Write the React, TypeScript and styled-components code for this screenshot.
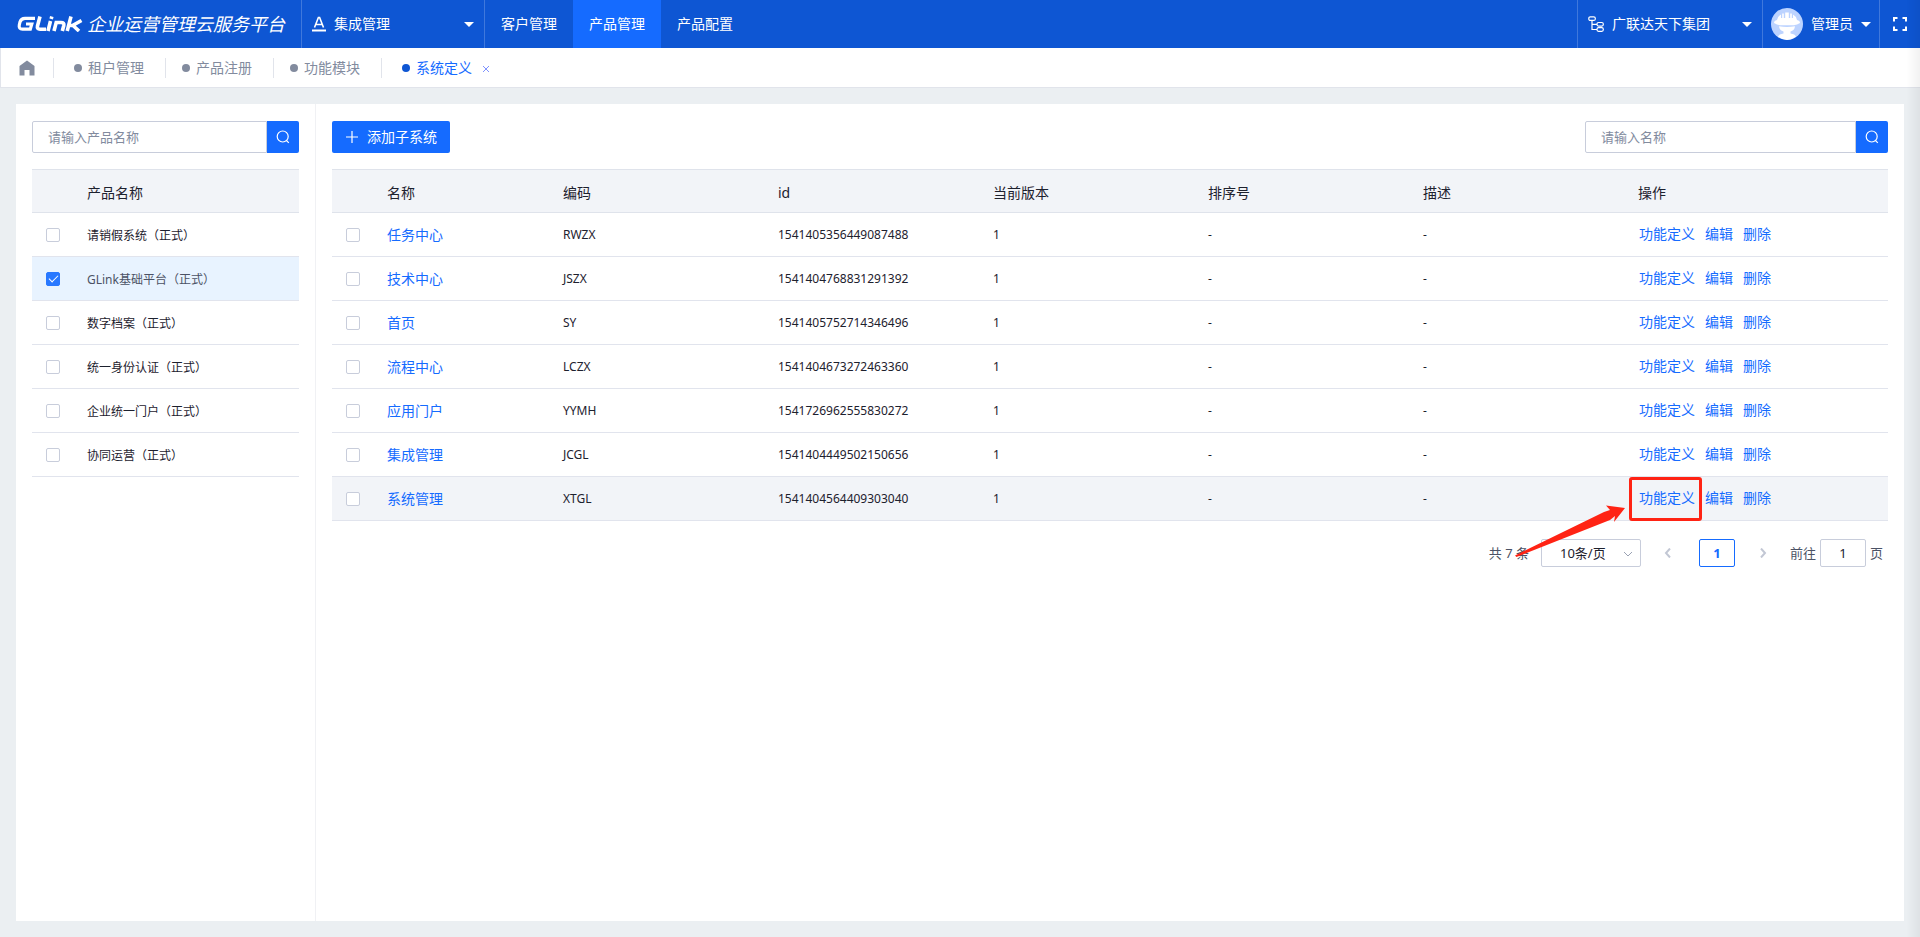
import React, { useState } from 'react';
import styled, { createGlobalStyle, css } from 'styled-components';

const GlobalStyle = createGlobalStyle`
  * { box-sizing: border-box; }
  body {
    margin: 0;
    background: #ebeff2;
    color: #1d212e;
    font: 14px/20px "Noto Sans", "Noto Sans CJK SC", sans-serif;
  }
  button, input, select { font: inherit; color: inherit; margin: 0; }
  button { border: 0; padding: 0; background: none; cursor: pointer; }
  a { text-decoration: none; }
  svg { flex: none; }
`;

const Page = styled.div`
  min-height: 100vh;
  display: flex;
  flex-direction: column;
  overflow-x: hidden;
`;

const Header = styled.header`
  height: 48px;
  display: flex;
  background: #0e56d3;
  color: #fff;
`;

const Brand = styled.div`
  width: 301px;
  display: flex;
  align-items: center;
  gap: 3px;
  padding-left: 17px;
  flex: none;
`;

const BrandTitle = styled.h1`
  margin: 0;
  font-size: 18px;
  line-height: 24px;
  font-weight: 400;
  font-style: italic;
  white-space: nowrap;
`;

const HeaderButton = styled.button<{ $width: number; $left?: number; $right?: number }>`
  width: ${(p) => p.$width}px;
  flex: none;
  display: flex;
  align-items: center;
  gap: 8px;
  padding: 0 ${(p) => p.$right ?? 10}px 0 ${(p) => p.$left ?? 10}px;
  border-left: 1px solid #3f78dc;
  white-space: nowrap;
`;

const Caret = styled.span`
  border: 5px solid transparent;
  border-top-color: #fff;
  border-bottom: 0;
`;

const Push = styled.span`
  flex: 1;
  text-align: left;
`;

const Nav = styled.nav`
  flex: 1;
  display: flex;
  border-left: 1px solid #3f78dc;
`;

const NavLink = styled.a<{ $active?: boolean }>`
  padding: 0 16px;
  line-height: 48px;
  color: #fff;
  white-space: nowrap;
  ${(p) => p.$active && css`background: #156bff;`}
`;

const TabBar = styled.nav`
  height: 40px;
  display: flex;
  align-items: center;
  background: #fff;
  border: 1px solid #e1e4eb;
  border-top: 0;
  border-right: 0;
`;

const Home = styled.a`
  width: 52px;
  padding-left: 18px;
  display: flex;
`;

const Tab = styled.div<{ $wide?: boolean }>`
  height: 20px;
  display: flex;
  align-items: center;
  border-left: 1px solid #e1e4eb;
  padding: 0 21px 0 ${(p) => (p.$wide ? 20 : 16)}px;
`;

const TabLink = styled.a<{ $active?: boolean }>`
  display: flex;
  align-items: center;
  gap: 6px;
  color: ${(p) => (p.$active ? '#156bff' : '#828b9e')};
  &::before {
    content: "";
    width: 8px;
    height: 8px;
    border-radius: 50%;
    background: ${(p) => (p.$active ? '#0e56d3' : '#828b9e')};
  }
`;

const CloseTab = styled.button`
  margin-left: 10px;
  padding-top: 3px;
  display: flex;
`;

const Main = styled.main`
  flex: 1;
  display: flex;
  margin: 16px;
  background: #fff;
`;

const ProductPanel = styled.aside`
  width: 300px;
  flex: none;
  padding: 17px 16px;
  border-right: 1px solid #f0f1f4;
`;

const SystemPanel = styled.section`
  flex: 1;
  min-width: 0;
  padding: 17px 16px;
`;

const Toolbar = styled.div`
  display: flex;
  justify-content: space-between;
  margin-bottom: 16px;
`;

const SearchForm = styled.form<{ $width?: number }>`
  width: ${(p) => (p.$width ? `${p.$width}px` : '100%')};
  height: 32px;
  display: flex;
`;

const SearchInput = styled.input`
  flex: 1;
  min-width: 0;
  border: 1px solid #c8cddb;
  border-radius: 2px 0 0 2px;
  padding: 0 15px;
  font-size: 13px;
  outline: 0;
  &::placeholder { color: #828b9e; opacity: 1; }
`;

const SearchButton = styled.button`
  width: 32px;
  display: grid;
  place-items: center;
  background: #156bff;
  border-radius: 0 2px 2px 0;
`;

const AddButton = styled.button`
  height: 32px;
  display: flex;
  align-items: center;
  gap: 9px;
  padding: 0 13px 0 14px;
  background: #156bff;
  color: #fff;
  border-radius: 2px;
`;

const Table = styled.table`
  width: 100%;
  table-layout: fixed;
  border-collapse: separate;
  border-spacing: 0;
  font-size: 12px;
`;

const HeadCell = styled.th<{ $width?: number }>`
  width: ${(p) => (p.$width ? `${p.$width}px` : 'auto')};
  height: 44px;
  padding: 4px 10px 0;
  background: #f2f4f8;
  border: solid #dfe3eb;
  border-width: 1px 0;
  font-size: 14px;
  font-weight: 400;
  text-align: left;
`;

const Row = styled.tr<{ $selected?: boolean; $hovered?: boolean }>`
  ${(p) => p.$selected && css`background: #e8f3ff; color: #4b5265;`}
  ${(p) => p.$hovered && css`background: #f2f4f8;`}
`;

const Cell = styled.td`
  height: 44px;
  padding: 0 10px;
  border-bottom: 1px solid #e1e4ed;
  white-space: nowrap;
`;

const CheckCell = styled(Cell)`
  padding: 0 0 0 14px;
`;

const NameCell = styled(Cell)`
  padding-top: 2px;
`;

const Checkbox = styled.input.attrs({ type: 'checkbox' })`
  appearance: none;
  display: block;
  width: 14px;
  height: 14px;
  border: 1px solid #c8cddb;
  border-radius: 2px;
  background: #fff;
  &:checked {
    border-color: #2878ff;
    background: #2878ff;
  }
  &:checked::after {
    content: "";
    display: block;
    width: 4px;
    height: 8px;
    margin: 0 auto;
    border: solid #fff;
    border-width: 0 1px 1px 0;
    transform: rotate(45deg);
  }
`;

const TextLink = styled.a`
  color: #156bff;
  font-size: 14px;
`;

const Actions = styled.div`
  display: flex;
  gap: 10px;
`;

const ActionCell = styled(Cell)`
  padding-left: 11px;
`;

const Marked = styled.span`
  position: relative;
`;

const MarkBox = styled.span`
  position: absolute;
  inset: -11px -7px -12px -10px;
  border: 3px solid #ff2314;
  border-radius: 3px;
  pointer-events: none;
`;

const MarkArrow = styled.svg`
  position: absolute;
  right: 69px;
  top: 16px;
  pointer-events: none;
`;

const Pagination = styled.div`
  display: flex;
  align-items: center;
  justify-content: flex-end;
  margin-top: 18px;
  padding-right: 5px;
  font-size: 13px;
  color: #4b5265;
`;

const SizePicker = styled.label`
  width: 100px;
  height: 28px;
  margin-left: 12px;
  display: grid;
  align-items: center;
  border: 1px solid #c8cddb;
  border-radius: 2px;
  color: #1d212e;
  & > * { grid-area: 1 / 1; }
  & > svg { justify-self: end; margin-right: 7px; }
`;

const SizeSelect = styled.select`
  appearance: none;
  width: 100%;
  height: 26px;
  border: 0;
  padding: 0 18px;
  background: none;
`;

const PageArrow = styled.button`
  width: 54px;
  height: 28px;
  display: grid;
  place-items: center;
`;

const PageNumber = styled.button`
  width: 36px;
  height: 28px;
  margin: 0 1px 0 4px;
  border: 1px solid #156bff;
  border-radius: 2px;
  color: #156bff;
  font-weight: 700;
`;

const Jump = styled.label`
  display: flex;
  align-items: center;
  gap: 4px;
`;

const JumpInput = styled.input`
  width: 46px;
  height: 28px;
  border: 1px solid #c8cddb;
  border-radius: 2px;
  text-align: center;
  color: #1d212e;
`;

const EdgeShade = styled.div`
  position: fixed;
  top: 0;
  right: 0;
  bottom: 0;
  width: 14px;
  background: linear-gradient(to right, rgba(0, 0, 0, 0), rgba(0, 0, 0, 0.05));
  pointer-events: none;
`;

const Logo = () => (
  <svg width="67" height="16" viewBox="0 0 67 16" fill="none" stroke="#fff" strokeWidth="3.600" role="img" aria-label="GLink">
    <path d="M18 2.300H8Q4 2.300 3 6L2.300 9Q1.500 13.200 5.500 13.200H13.300L14.800 8H9" strokeWidth="3.200" />
    <path d="M23 0.500L20.500 10Q19.800 13.200 23 13.200H29" />
    <path d="M33.500 5L31 15M34.800 0.500L34.200 3" />
    <path d="M37 15L39.200 6.500H44Q47.500 6.500 46.800 9.500L45.300 15" />
    <path d="M54 0.500L50.200 15M52.500 9.500H55.500L64.500 4.500M55.500 9L62 15" />
  </svg>
);

const AppIcon = () => (
  <svg width="14" height="16" viewBox="0 0 14 16" fill="none" stroke="#fff" strokeWidth="1.600" aria-hidden="true">
    <path d="M2.500 11.500L6.400 1.500H7.600L11.500 11.500M4 8.500H10" />
    <path d="M0 14.500H14" strokeWidth="2" />
  </svg>
);

const TreeIcon = () => (
  <svg width="16" height="16" viewBox="0 0 16 16" fill="none" stroke="#fff" strokeWidth="1.200" aria-hidden="true">
    <rect x="0.800" y="0.800" width="6.500" height="3.600" rx="1.500" />
    <rect x="9" y="6.500" width="6.300" height="3.600" rx="1.500" />
    <rect x="9" y="11.700" width="6.300" height="3.600" rx="1.500" />
    <path d="M4 4.400V13.500H9M4 8.300H9" />
  </svg>
);

const Avatar = () => (
  <svg width="32" height="32" viewBox="0 0 32 32" aria-hidden="true">
    <circle cx="16" cy="16" r="16" fill="#bcd3ff" />
    <g fill="#fff">
      <path d="M3 15Q3 12.500 6 12Q7 8 10 6.500V10H11.200V5.500H12.800V10H14.200V4.500H17.800V10H19.200V5.500H20.800V10H22V6.500Q25 8 26 12Q29 12.500 29 15Q26 17 23 17.200H9Q6 17 3 15Z" />
      <path d="M8 18.300Q16 19.800 24 18.300Q23.500 22.500 19.500 23.500V25.500Q24 26 25 28.800Q16 35 7 28.800Q8 26 12.500 25.500V23.500Q8.500 22.500 8 18.300Z" />
    </g>
  </svg>
);

const FullscreenIcon = () => (
  <svg width="14" height="14" viewBox="0 0 14 14" fill="none" stroke="#fff" strokeWidth="2" aria-hidden="true">
    <path d="M1 4.500V1H4.500M9.500 1H13V4.500M13 9.500V13H9.500M4.500 13H1V9.500" />
  </svg>
);

const HomeIcon = () => (
  <svg width="16" height="16" viewBox="0 0 16 16" fill="#828b9e" aria-hidden="true">
    <path d="M8 0.500L15.500 6V15.500H10.500V10H5.500V15.500H0.500V6Z" />
  </svg>
);

const SearchIcon = () => (
  <svg width="14" height="14" viewBox="0 0 14 14" fill="none" stroke="#fff" strokeWidth="1.200" aria-hidden="true">
    <circle cx="6.700" cy="6.500" r="5.500" />
    <path d="M10.500 10.500L12.800 12.800" />
  </svg>
);

const PlusIcon = () => (
  <svg width="12" height="12" viewBox="0 0 12 12" stroke="#fff" strokeWidth="1.200" aria-hidden="true">
    <path d="M0 6H12M6 0V12" />
  </svg>
);

const CloseIcon = () => (
  <svg width="8" height="8" viewBox="0 0 8 8" stroke="#7f92ff" aria-hidden="true">
    <path d="M1 1L7 7M7 1L1 7" />
  </svg>
);

const Chevron = ({ d, color = '#c2c7d4', width = 2 }: { d: string; color?: string; width?: number }) => (
  <svg width="10" height="10" viewBox="0 0 10 10" fill="none" stroke={color} strokeWidth={width} aria-hidden="true">
    <path d={d} />
  </svg>
);

const navItems = ['客户管理', '产品管理', '产品配置'];
const tabs = ['租户管理', '产品注册', '功能模块', '系统定义'];
const products = ['请销假系统（正式）', 'GLink基础平台（正式）', '数字档案（正式）', '统一身份认证（正式）', '企业统一门户（正式）', '协同运营（正式）'];
const systems = [
  ['任务中心', 'RWZX', '1541405356449087488'],
  ['技术中心', 'JSZX', '1541404768831291392'],
  ['首页', 'SY', '1541405752714346496'],
  ['流程中心', 'LCZX', '1541404673272463360'],
  ['应用门户', 'YYMH', '1541726962555830272'],
  ['集成管理', 'JCGL', '1541404449502150656'],
  ['系统管理', 'XTGL', '1541404564409303040'],
];
const columns: { title: string; width?: number }[] = [
  { title: '名称', width: 176 },
  { title: '编码' },
  { title: 'id' },
  { title: '当前版本' },
  { title: '排序号' },
  { title: '描述' },
  { title: '操作', width: 260 },
];

const Search = ({ placeholder, width }: { placeholder: string; width?: number }) => (
  <SearchForm $width={width} onSubmit={(e) => e.preventDefault()}>
    <SearchInput aria-label={placeholder} placeholder={placeholder} />
    <SearchButton aria-label="搜索"><SearchIcon /></SearchButton>
  </SearchForm>
);

export default function App() {
  const [selected, setSelected] = useState(1);
  const highlighted = systems.length - 1;

  return (
    <Page>
      <GlobalStyle />
      <Header>
        <Brand>
          <Logo />
          <BrandTitle>企业运营管理云服务平台</BrandTitle>
        </Brand>
        <HeaderButton $width={183}>
          <AppIcon />
          <Push>集成管理</Push>
          <Caret />
        </HeaderButton>
        <Nav>
          {navItems.map((item, i) => (
            <NavLink key={item} href="#" $active={i === 1}>{item}</NavLink>
          ))}
        </Nav>
        <HeaderButton $width={185}>
          <TreeIcon />
          <Push>广联达天下集团</Push>
          <Caret />
        </HeaderButton>
        <HeaderButton $width={117} $left={8}>
          <Avatar />
          <span>管理员</span>
          <Caret />
        </HeaderButton>
        <HeaderButton $width={41} $left={13} $right={13} aria-label="全屏">
          <FullscreenIcon />
        </HeaderButton>
      </Header>

      <TabBar>
        <Home href="#" aria-label="首页"><HomeIcon /></Home>
        {tabs.map((tab, i) => (
          <Tab key={tab} $wide={i === 0 || i === 3}>
            <TabLink href="#" $active={i === 3}>{tab}</TabLink>
            {i === 3 && <CloseTab aria-label="关闭"><CloseIcon /></CloseTab>}
          </Tab>
        ))}
      </TabBar>

      <Main>
        <ProductPanel>
          <Toolbar><Search placeholder="请输入产品名称" /></Toolbar>
          <Table>
            <thead>
              <tr>
                <HeadCell $width={45} />
                <HeadCell>产品名称</HeadCell>
              </tr>
            </thead>
            <tbody>
              {products.map((product, i) => (
                <Row key={product} $selected={i === selected}>
                  <CheckCell>
                    <Checkbox aria-label={product} checked={i === selected} onChange={() => setSelected(i)} />
                  </CheckCell>
                  <NameCell>{product}</NameCell>
                </Row>
              ))}
            </tbody>
          </Table>
        </ProductPanel>

        <SystemPanel>
          <Toolbar>
            <AddButton><PlusIcon />添加子系统</AddButton>
            <Search placeholder="请输入名称" width={303} />
          </Toolbar>
          <Table>
            <thead>
              <tr>
                <HeadCell $width={45} />
                {columns.map((c) => <HeadCell key={c.title} $width={c.width}>{c.title}</HeadCell>)}
              </tr>
            </thead>
            <tbody>
              {systems.map(([name, code, id], i) => (
                <Row key={id} $hovered={i === highlighted}>
                  <CheckCell><Checkbox aria-label={name} /></CheckCell>
                  <NameCell><TextLink href="#">{name}</TextLink></NameCell>
                  <Cell>{code}</Cell>
                  <Cell>{id}</Cell>
                  <Cell>1</Cell>
                  <Cell>-</Cell>
                  <Cell>-</Cell>
                  <ActionCell>
                    <Actions>
                      <Marked>
                        <TextLink href="#">功能定义</TextLink>
                        {i === highlighted && (
                          <>
                            <MarkBox />
                            <MarkArrow width="112" height="56" viewBox="0 0 112 56" fill="#ff2314" aria-hidden="true">
                              <path d="M111 4L92 1.500L96 6L90 8L1 51.500L2.500 53L96 16L101 12L100 18Z" />
                            </MarkArrow>
                          </>
                        )}
                      </Marked>
                      <TextLink href="#">编辑</TextLink>
                      <TextLink href="#">删除</TextLink>
                    </Actions>
                  </ActionCell>
                </Row>
              ))}
            </tbody>
          </Table>
          <Pagination>
            <span>共 7 条</span>
            <SizePicker>
              <SizeSelect aria-label="每页条数" defaultValue="10">
                <option value="10">10条/页</option>
                <option value="20">20条/页</option>
              </SizeSelect>
              <Chevron d="M1 4L5 8L9 4" color="#9aa2b3" width={1} />
            </SizePicker>
            <PageArrow aria-label="上一页"><Chevron d="M7 0.500L3 5L7 9.500" /></PageArrow>
            <PageNumber>1</PageNumber>
            <PageArrow aria-label="下一页"><Chevron d="M3 0.500L7 5L3 9.500" /></PageArrow>
            <Jump>
              前往
              <JumpInput defaultValue="1" />
              页
            </Jump>
          </Pagination>
        </SystemPanel>
      </Main>
      <EdgeShade />
    </Page>
  );
}
